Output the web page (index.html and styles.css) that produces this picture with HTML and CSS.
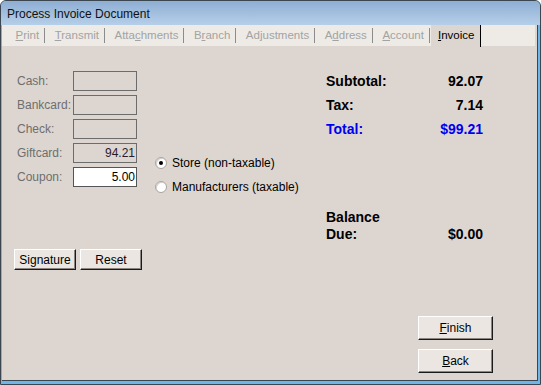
FILE: index.html
```html
<!DOCTYPE html>
<html lang="en">
<head>
  <meta charset="UTF-8" />
  <title>Process Invoice Document</title>
  <link rel="stylesheet" href="styles.css">
</head>
<body>
  <div class="window">
    <div class="titlebar">Process Invoice Document</div>
    <div class="frame">
      <nav class="tabs">
        <span class="tab"><u>P</u>rint</span>
        <span class="tab"><u>T</u>ransmit</span>
        <span class="tab">Atta<u>c</u>hments</span>
        <span class="tab">B<u>r</u>anch</span>
        <span class="tab">Ad<u>j</u>ustments</span>
        <span class="tab">A<u>d</u>dress</span>
        <span class="tab"><u>A</u>ccount</span>
        <span class="tab active"><u>I</u>nvoice</span>
      </nav>

      <main class="content">
        <section class="left">
          <div class="payments">
            <label>Cash:</label><div class="box"></div>
            <label>Bankcard:</label><div class="box"></div>
            <label>Check:</label><div class="box"></div>
            <label>Giftcard:</label><div class="box">94.21</div>
            <label>Coupon:</label><div class="box editable">5.00</div>
          </div>
          <div class="btn-row">
            <button class="btn sig">Signature</button>
            <button class="btn reset">Reset</button>
          </div>
        </section>

        <section class="middle">
          <div class="radio"><span class="dot checked"></span>Store (non-taxable)</div>
          <div class="radio"><span class="dot"></span>Manufacturers (taxable)</div>
        </section>

        <section class="right">
          <div class="sum"><span>Subtotal:</span><span>92.07</span></div>
          <div class="sum"><span>Tax:</span><span>7.14</span></div>
          <div class="sum total"><span>Total:</span><span>$99.21</span></div>
          <div class="sum balance"><span>Balance<br>Due:</span><span>$0.00</span></div>
          <div class="actions">
            <button class="btn big"><u>F</u>inish</button>
            <button class="btn big"><u>B</u>ack</button>
          </div>
        </section>
      </main>
    </div>
  </div>
</body>
</html>
```

FILE: styles.css
```css
html, body {
  margin: 0;
  background: #ffffff;
}
body {
  font-family: 'Liberation Sans', Arial, sans-serif;
  font-size: 12px;
  color: #000;
}
.window {
  width: 541px;
  height: 385px;
  box-sizing: border-box;
  border: 1px solid #3c4650;
  border-radius: 6px 6px 0 0;
  overflow: hidden;
  display: flex;
  flex-direction: column;
  background: #6fb6e8;
}
.titlebar {
  height: 24px;
  line-height: 26px;
  padding-left: 6px;
  background: linear-gradient(#8eaed3, #b6cfe9);
  color: #111;
  font-size: 12px;
}
.frame {
  flex: 1;
  margin: 0 2px 3px 1px;
  border-right: 1px solid #3c4650;
  border-bottom: 1px solid #3c4650;
  background: #ddd6d0;
  display: flex;
  flex-direction: column;
}
.tabs {
  display: flex;
  height: 21px;
  width: 533px;
  background: #eeebe6;
  padding-left: 4px;
  box-sizing: border-box;
  font-size: 11.5px;
}
.tab {
  color: #a3a3a3;
  line-height: 21px;
  padding: 0 6px 0 9.5px;
  position: relative;
}
.tab::after {
  content: "";
  position: absolute;
  right: 0;
  top: 3px;
  bottom: 3px;
  border-right: 1px solid #8c8c8c;
}
.tab.active {
  background: #ddd6d0;
  color: #000;
  margin-left: 1px;
  padding: 0 6px 0 7px;
  border-right: 1px solid #000;
  height: 22px;
}
.tab.active::after {
  display: none;
}

.content {
  flex: 1;
  display: flex;
  padding-left: 12px;
}
.left {
  width: 141px;
  padding-top: 25px;
}
.payments {
  display: grid;
  grid-template-columns: 56px 64px;
  row-gap: 4px;
  margin-left: 3px;
  align-items: center;
}
.payments label {
  color: #6e6e6e;
}
.box {
  height: 18px;
  border: 1px solid #6c6c6c;
  text-align: right;
  line-height: 18px;
  padding-right: 1px;
  color: #2a1a2a;
}
.box.editable {
  background: #fff;
  color: #000;
  border-color: #555;
}
.btn-row {
  display: flex;
  gap: 4px;
  margin-top: 62px;
}
.btn {
  font-family: inherit;
  font-size: 12px;
  background: #ebe6e1;
  border: 1px solid;
  border-color: #fff #1a1a1a #1a1a1a #fff;
  box-shadow: inset -1px -1px #8a8580;
  padding: 0;
  color: #000;
}
.btn.sig {
  width: 62px;
  height: 21px;
}
.btn.reset {
  width: 62px;
  height: 21px;
}

.middle {
  padding-top: 105px;
  width: 171px;
}
.radio {
  display: flex;
  align-items: center;
  height: 24px;
}
.dot {
  width: 12px;
  height: 12px;
  border-radius: 50%;
  background: #fff;
  border: 1px solid #a9a49f;
  box-shadow: inset 1px 1px #d8d4d0;
  box-sizing: border-box;
  margin-right: 5px;
  position: relative;
}
.dot.checked::after {
  content: "";
  position: absolute;
  left: 3px;
  top: 3px;
  width: 4px;
  height: 4px;
  border-radius: 50%;
  background: #000;
}

.right {
  width: 167px;
  padding-top: 23px;
  display: flex;
  flex-direction: column;
}
.sum {
  display: flex;
  justify-content: space-between;
  align-items: flex-end;
  font-size: 14px;
  font-weight: bold;
  height: 24px;
  line-height: 24px;
  padding-right: 10px;
}
.sum.total {
  color: #0000f0;
}
.sum.balance {
  margin-top: 68px;
  line-height: 17px;
  height: auto;
}
.actions {
  display: flex;
  flex-direction: column;
  align-items: flex-end;
  gap: 9px;
  margin-top: 73px;
}
.btn.big {
  width: 75px;
  height: 24px;
}
```
